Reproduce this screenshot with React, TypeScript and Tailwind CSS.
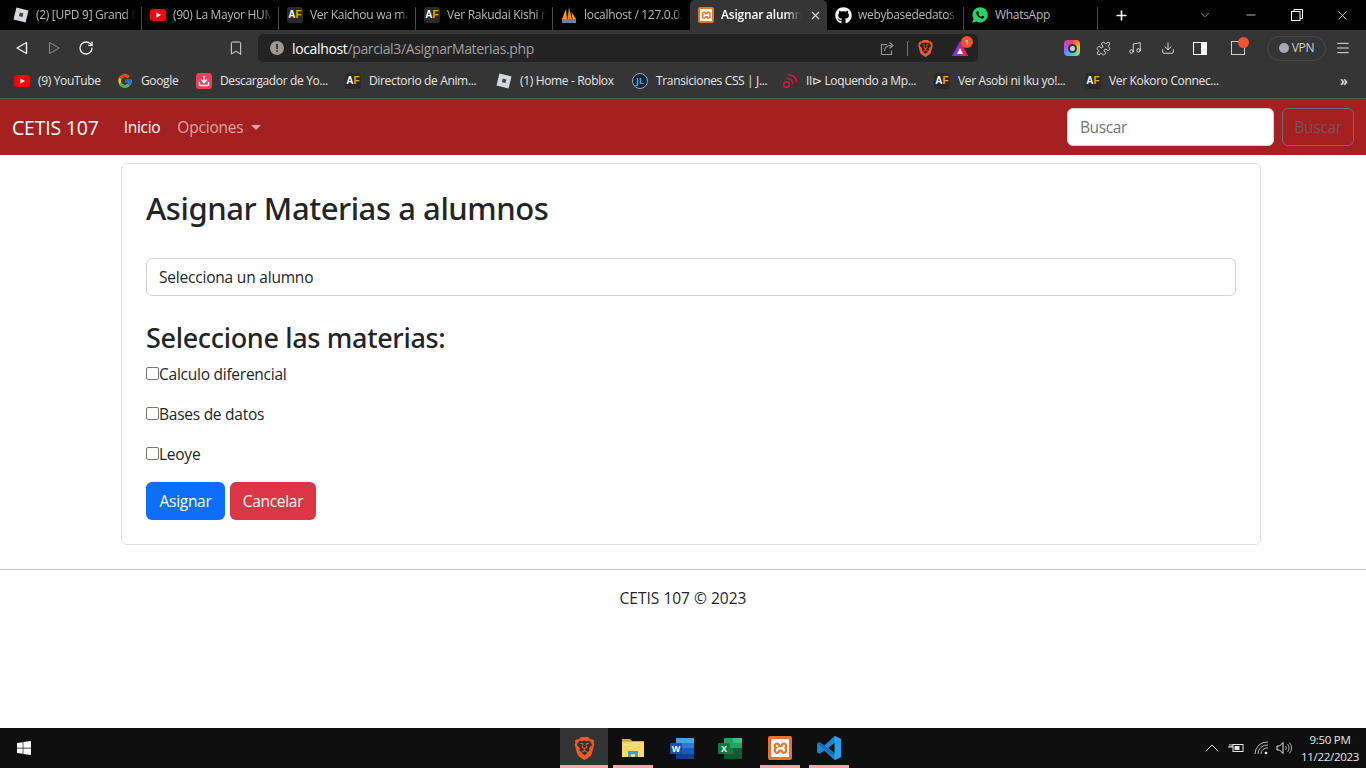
import { Bookmark, ChevronDown, Download, Menu, Minus, Music, Plus, Puzzle, RotateCw, ChevronUp, X } from "lucide-react";
import { FaGithub, FaWindows } from "react-icons/fa";
import { FcGoogle } from "react-icons/fc";
import { SiBrave, SiXampp } from "react-icons/si";
import { IoLogoWhatsapp } from "react-icons/io";

const ui = "font-['Open_Sans','Noto_Sans',sans-serif]";

function Roblox({ size = 16 }: { size?: number }) {
  return (
    <svg width={size} height={size} viewBox="0 0 16 16">
      <path d="M3.4 0.5 15.5 3.4 12.6 15.5 0.5 12.6Z" fill="#d5d8dc" />
      <path d="M6.8 5.6 10.4 6.5 9.5 10.1 5.9 9.2Z" fill="#444" />
    </svg>
  );
}

function Youtube() {
  return (
    <svg width="16" height="12" viewBox="0 0 16 12">
      <rect width="16" height="12" rx="3" fill="#f00" />
      <path d="M6.3 3.3 11 6 6.3 8.7Z" fill="#fff" />
    </svg>
  );
}

function AF() {
  return (
    <span className="flex h-4 w-4 shrink-0 items-center justify-center rounded-[3px] bg-[#2a2a2a] font-['Liberation_Sans',sans-serif] text-[10px] font-bold leading-none text-white">
      A<span className="text-[#f5a623]">F</span>
    </span>
  );
}

function Pma() {
  return (
    <svg width="18" height="18" viewBox="0 0 18 18">
      <path d="M2 13 6 3 7 13Z" fill="#f39c2b" />
      <path d="M7.5 13 9 1 12 13Z" fill="#e8891c" />
      <path d="M12.5 13 11.5 6 16 13Z" fill="#f39c2b" />
      <rect x="2" y="13" width="14" height="4" fill="#6b7fa8" />
    </svg>
  );
}

function Xampp({ size = 16 }: { size?: number }) {
  return (
    <span className="flex shrink-0 items-center justify-center rounded-[2px] bg-[#e8742c]" style={{ width: size, height: size }}>
      <SiXampp color="#fff" size={size * 0.78} />
    </span>
  );
}

function Word() {
  return (
    <svg width="24" height="24" viewBox="0 0 24 24">
      <rect x="6" y="2" width="18" height="21" rx="1" fill="#2b7cd3" />
      <rect x="6" y="2" width="18" height="5" fill="#41a5ee" />
      <rect x="6" y="12" width="18" height="6" fill="#185abd" />
      <rect x="6" y="18" width="18" height="5" fill="#103f91" />
      <rect x="0" y="7" width="12" height="11" rx="1" fill="#1e4fb0" />
      <text x="6" y="16" textAnchor="middle" fontSize="9" fontWeight="700" fill="#fff" fontFamily="Liberation Sans">W</text>
    </svg>
  );
}

function Excel() {
  return (
    <svg width="24" height="24" viewBox="0 0 24 24">
      <rect x="6" y="2" width="18" height="21" rx="1" fill="#21a366" />
      <rect x="15" y="2" width="9" height="5" fill="#33c481" />
      <rect x="6" y="12" width="9" height="6" fill="#107c41" />
      <rect x="15" y="12" width="9" height="6" fill="#185c37" />
      <rect x="6" y="18" width="18" height="5" fill="#0f5a32" />
      <rect x="0" y="7" width="12" height="11" rx="1" fill="#107c41" />
      <text x="6" y="16" textAnchor="middle" fontSize="9" fontWeight="700" fill="#fff" fontFamily="Liberation Sans">X</text>
    </svg>
  );
}

function VsCode() {
  return (
    <svg width="26" height="26" viewBox="0 0 24 24">
      <path d="M17.2 1 23 3.8v16.4L17.2 23 7.6 14.2 3.4 17.4 1 16.2V7.8l2.4-1.2 4.2 3.2zM17.4 7.2 11.2 12l6.2 4.8z" fill="#1a8ad6" />
      <path d="M17.2 1 23 3.8v16.4L17.2 23z" fill="#27a3ea" />
      <path d="M3.4 6.6 17.2 17v0L15 19 1 7.8z" fill="#0f6fb5" />
    </svg>
  );
}

function Tab({ icon, title, active, noSep }: { icon: React.ReactNode; title: string; active?: boolean; noSep?: boolean }) {
  return (
    <div className={`flex h-[30px] w-[137px] shrink-0 items-center pl-[7px] ${active ? "rounded-t-[5px] bg-[#353535]" : ""}`}>
      <span className="flex w-[18px] shrink-0 justify-center">{icon}</span>
      {active ? (
        <>
          <span className="ml-[6px] w-[80px] overflow-hidden whitespace-nowrap text-[12px] font-semibold tracking-[-0.2px] text-white [mask-image:linear-gradient(90deg,#000_80%,transparent)]">{title}</span>
          <X size={13} className="ml-[8px] text-[#e0e0e0]" />
        </>
      ) : (
        <span className="ml-[6px] w-[99px] overflow-hidden whitespace-nowrap text-[12px] tracking-[-0.3px] text-[#b9b9b9] [mask-image:linear-gradient(90deg,#000_90%,transparent)]">{title}</span>
      )}
      {!active && !noSep && <span className="ml-auto h-[23px] w-px self-end bg-[#4a4a4a]" />}
    </div>
  );
}

function Mark({ icon, title, width }: { icon: React.ReactNode; title: string; width: number }) {
  return (
    <div className="flex shrink-0 items-center" style={{ width }}>
      <span className="flex w-4 shrink-0 justify-center">{icon}</span>
      <span className="ml-[8px] whitespace-nowrap text-[12px] tracking-[-0.35px] text-[#e6e6e6]">{title}</span>
    </div>
  );
}

function BrowserBar() {
  return (
    <>
      <div className="flex h-[30px] items-center bg-black pl-[5px]">
        <Tab icon={<Roblox />} title="(2) [UPD 9] Grand Piece" />
        <Tab icon={<Youtube />} title="(90) La Mayor HUMILLACIÓN" />
        <Tab icon={<AF />} title="Ver Kaichou wa maid" />
        <Tab icon={<AF />} title="Ver Rakudai Kishi no" />
        <Tab noSep icon={<Pma />} title="localhost / 127.0.0.1" />
        <Tab active icon={<Xampp />} title="Asignar alumnos" />
        <Tab icon={<FaGithub size={17} color="#fff" />} title="webybasededatos2" />
        <div className="flex h-[30px] w-[134px] shrink-0 items-center pl-[7px]">
          <IoLogoWhatsapp size={18} color="#25d366" className="shrink-0" />
          <span className="ml-[6px] text-[12px] tracking-[-0.3px] text-[#b9b9b9]">WhatsApp</span>
          <span className="ml-auto h-[23px] w-px self-end bg-[#4a4a4a]" />
        </div>
        <Plus size={15} strokeWidth={2.5} className="ml-[16px] text-white" />
        <ChevronDown size={14} strokeWidth={1.2} className="ml-[69px] text-[#cfcfcf]" />
        <Minus size={14} strokeWidth={1.2} className="ml-[32px] text-white" />
        <svg width="12" height="12" viewBox="0 0 12 12" className="ml-[33px]" fill="none" stroke="#fff">
          <rect x="0.5" y="2.5" width="8.5" height="9" />
          <path d="M3 2.5V0.5h8.5v9H9" />
        </svg>
        <X size={15} strokeWidth={1.2} className="ml-[32px] text-white" />
      </div>

      <div className="flex h-9 items-center bg-[#353535]">
        <svg width="14" height="14" viewBox="0 0 14 14" className="ml-[15px]" fill="none" stroke="#f0f0f0" strokeWidth="1.4" strokeLinejoin="round">
          <path d="M11.5 1.5v11L2 7Z" />
        </svg>
        <svg width="14" height="14" viewBox="0 0 14 14" className="ml-[18px]" fill="none" stroke="#777" strokeWidth="1.3" strokeLinejoin="round">
          <path d="M2.5 1.5v11L12 7Z" />
        </svg>
        <RotateCw size={16} strokeWidth={1.9} className="ml-[17px] text-[#f0f0f0]" />
        <Bookmark size={16} strokeWidth={1.5} className="ml-[134px] text-[#dcdcdc]" />
        <div className="ml-[14px] flex h-7 w-[720px] items-center rounded-[5px] bg-[#232323] pl-[12px]">
          <span className="flex h-[14px] w-[14px] items-center justify-center rounded-full bg-[#9a9a9a] text-[10px] font-bold leading-none text-[#232323]">!</span>
          <span className="ml-[8px] text-[14px] tracking-[-0.36px] text-white">localhost<span className="text-[#a0a0a0]">/parcial3/AsignarMaterias.php</span></span>
          <svg width="15" height="15" viewBox="0 0 15 15" className="ml-auto" fill="none" stroke="#999" strokeWidth="1.1">
            <path d="M7 3.5H1.5v10h10V9.5" />
            <path d="M4.5 10c0-4 3-5.5 7-5.5M9.5 1.5l3.5 3-3.5 3" />
          </svg>
          <span className="ml-[12px] h-[15px] w-px bg-[#777]" />
          <SiBrave size={17} color="#f15a22" className="ml-[9px]" />
          <span className="relative ml-[18px] flex h-4 w-4 items-center justify-center">
            <svg width="16" height="15" viewBox="0 0 16 15">
              <path d="M8 0 16 15H0Z" fill="#7b2ff7" />
              <path d="M8 0 16 15H8Z" fill="#e0245e" />
              <path d="M8 7 11 13H5Z" fill="#fff" />
            </svg>
            <span className="absolute -right-[5px] -top-[4px] flex h-[12px] w-[12px] items-center justify-center rounded-full bg-[#f0532d] text-[8px] leading-none text-white">1</span>
          </span>
          <span className="w-[10px]" />
        </div>
        <span className="ml-[86px] flex h-4 w-4 items-center justify-center rounded-[4px] bg-[conic-gradient(#f43f5e,#facc15,#22d3ee,#a855f7,#f43f5e)]">
          <span className="h-[9px] w-[9px] rounded-full border-2 border-[#333] bg-[#cbd5e1]" />
        </span>
        <Puzzle size={15} strokeWidth={1.4} className="ml-[16px] text-[#f0f0f0]" />
        <Music size={14} strokeWidth={1.4} className="ml-[17px] text-[#f0f0f0]" />
        <Download size={14} strokeWidth={1.4} className="ml-[19px] text-[#f0f0f0]" />
        <svg width="14" height="13" viewBox="0 0 14 13" className="ml-[18px]">
          <rect x="0.5" y="0.5" width="13" height="12" fill="none" stroke="#fff" />
          <rect x="8" y="0.5" width="6" height="12" fill="#fff" />
        </svg>
        <span className="relative ml-[24px] flex h-[14px] w-[14px] border border-[#cfcfcf]">
          <span className="absolute -right-[5px] -top-[5px] h-[11px] w-[11px] rounded-full bg-[#f0532d]" />
        </span>
        <span className="ml-[22px] flex h-[25px] w-[59px] items-center justify-center gap-[3px] rounded-full border border-[#4a4a4a] text-[12px] tracking-[-0.3px] text-[#d0d0d0]">
          <span className="h-[10px] w-[10px] rounded-full bg-[#a8a8b8]" />
          VPN
        </span>
        <Menu size={16} strokeWidth={1.4} className="ml-[9px] text-[#f0f0f0]" />
      </div>

      <div className="flex h-[33px] items-center border-b border-[#555] bg-[#353535] pb-[3px] pl-[14px]">
        <Mark width={103} icon={<Youtube />} title="(9) YouTube" />
        <Mark width={79} icon={<FcGoogle size={16} />} title="Google" />
        <Mark
          width={149}
          icon={
            <span className="flex h-4 w-4 items-center justify-center rounded-[3px] bg-[#ee3f56]">
              <Download size={12} strokeWidth={3} color="#fff" />
            </span>
          }
          title="Descargador de Yo..."
        />
        <Mark width={151} icon={<AF />} title="Directorio de Anim..." />
        <Mark width={136} icon={<Roblox />} title="(1) Home - Roblox" />
        <Mark
          width={150}
          icon={
            <span className="flex h-4 w-4 items-center justify-center rounded-full border border-[#9ab] bg-[#12263a] text-[9px] font-bold leading-none text-[#4aa3e0]">JL</span>
          }
          title="Transiciones CSS | J..."
        />
        <Mark
          width={152}
          icon={
            <svg width="16" height="16" viewBox="0 0 16 16" fill="none" stroke="#e1133c" strokeWidth="1.6">
              <circle cx="4.5" cy="11.5" r="2.8" />
              <path d="M5 5.5A6 6 0 0 1 11 11M6 1.5A10 10 0 0 1 15 9" />
            </svg>
          }
          title="II⊳ Loquendo a Mp..."
        />
        <Mark width={151} icon={<AF />} title="Ver Asobi ni Iku yo!..." />
        <Mark width={255} icon={<AF />} title="Ver Kokoro Connec..." />
        <span className="text-[14px] font-semibold leading-none text-[#e6e6e6]">»</span>
      </div>
    </>
  );
}

function Navbar() {
  return (
    <nav className="flex h-14 items-center bg-[#a52020] pl-3 pr-3">
      <span className="mt-[2px] text-[19.5px] tracking-[-0.2px] text-white">CETIS 107</span>
      <span className="ml-[25px] mt-[2px] text-[15.5px] tracking-[-0.3px] text-white">Inicio</span>
      <span className="ml-[17px] mt-[2px] text-[15.5px] tracking-[-0.2px] text-[#dba6a6]">Opciones</span>
      <span className="ml-[7px] h-0 w-0 border-x-[5px] border-t-[5px] border-x-transparent border-t-[#dba6a6]" />
      <div className="ml-auto flex gap-2">
        <div className="flex h-[38px] w-[207px] items-center rounded-[6px] border border-[#ced4da] bg-white px-3 pt-[2px] text-[15.5px] tracking-[-0.4px] text-[#6c757d]">Buscar</div>
        <div className="flex h-[38px] w-[72px] items-center justify-center rounded-[6px] border border-[#6c6f72] pt-[2px] text-[15.5px] tracking-[-0.3px] text-[#80505a]">Buscar</div>
      </div>
    </nav>
  );
}

const materias = ["Calculo diferencial", "Bases de datos", "Leoye"];

function Card() {
  return (
    <div className="ml-[121px] mt-2 w-[1140px] rounded-[6px] border border-[#dfdfdf] px-6 pb-6 pt-[23px]">
      <h1 className="font-['Noto_Sans',sans-serif] text-[31px] font-medium leading-[43px] tracking-[-0.43px] text-[#212529]">Asignar Materias a alumnos</h1>
      <div className="mt-[28px] flex h-[38px] items-center rounded-[6px] border border-[#ced4da] px-3 pt-[2px] text-[15.5px] tracking-[-0.2px] text-[#212529]">Selecciona un alumno</div>
      <h2 className="mt-[23px] font-['Noto_Sans',sans-serif] text-[27px] font-medium leading-[38px] tracking-[-0.33px] text-[#212529]">Seleccione las materias:</h2>
      <div className="mt-[6px] flex flex-col gap-4">
        {materias.map((m) => (
          <label key={m} className="flex h-6 items-center text-[15.5px] tracking-[-0.25px] text-[#212529]">
            <span className="mb-[4px] h-[13px] w-[13px] rounded-[2px] border border-[#767676] bg-white" />
            {m}
          </label>
        ))}
      </div>
      <div className="mt-[15px] flex gap-[5px]">
        <button className="h-[38px] w-[79px] rounded-[6px] bg-[#0d6efd] pt-[2px] text-[15.5px] tracking-[-0.3px] text-white">Asignar</button>
        <button className="h-[38px] w-[86px] rounded-[6px] bg-[#dc3545] pt-[2px] text-[15.5px] tracking-[-0.3px] text-white">Cancelar</button>
      </div>
    </div>
  );
}

function TaskIcon({ width, active, line, className, children }: { width: number; active?: boolean; line?: boolean; className?: string; children: React.ReactNode }) {
  return (
    <div className={`relative flex h-10 items-center justify-center ${active ? "bg-[#333]" : ""} ${className ?? ""}`} style={{ width }}>
      {children}
      {line && <span className="absolute inset-x-0 bottom-0 h-[3px] bg-[#f4a6a6]" />}
    </div>
  );
}

function Taskbar() {
  return (
    <div className="flex h-10 items-center bg-[#0f0f0f]">
      <FaWindows size={16} color="#fff" className="ml-4" />
      <div className="ml-[528px] flex h-10">
        <TaskIcon width={48} active line><SiBrave size={23} color="#f15a22" /></TaskIcon>
        <TaskIcon width={40} line className="ml-[5px]">
          <svg width="22" height="20" viewBox="0 0 22 20">
            <path d="M0 1h8l2 2h12v16H0z" fill="#e8a820" />
            <rect y="4" width="22" height="15" fill="#fcd96b" />
            <path d="M6 19v-6h10v6h-3v-3H9v3z" fill="#3f9ae0" />
          </svg>
        </TaskIcon>
        <TaskIcon width={40} className="ml-[9px]"><Word /></TaskIcon>
        <TaskIcon width={40} className="ml-[8px]"><Excel /></TaskIcon>
        <TaskIcon width={40} line className="ml-[10px]"><Xampp size={24} /></TaskIcon>
        <TaskIcon width={40} line className="ml-[9px]"><VsCode /></TaskIcon>
      </div>
      <div className="ml-auto flex items-center text-[#e6e6e6]">
        <ChevronUp size={24} strokeWidth={1} />
        <svg width="16" height="12" viewBox="0 0 16 12" className="ml-[4px]" fill="none" stroke="#e6e6e6">
          <rect x="5" y="2.5" width="10" height="7" />
          <rect x="6.5" y="4" width="5" height="4" fill="#e6e6e6" stroke="none" />
          <path d="M0 5h5M2 2v3M4 2v3" />
        </svg>
        <svg width="15" height="14" viewBox="0 0 15 14" className="ml-[10px]" fill="none" stroke="#bdbdbd" strokeWidth="1">
          <path d="M1 13A12 12 0 0 1 14 1M4 13A9 9 0 0 1 14 4M7 13A6 6 0 0 1 14 7" />
          <circle cx="12" cy="12" r="1.3" fill="#fff" stroke="none" />
        </svg>
        <svg width="16" height="14" viewBox="0 0 16 14" className="ml-[7px]" fill="none" stroke="#e6e6e6" strokeWidth="1">
          <path d="M1 5h2.5L7 1.5v11L3.5 9H1z" />
          <path d="M9.5 5a3 3 0 0 1 0 4M11.5 3a6 6 0 0 1 0 8M13.5 1.5a9 9 0 0 1 0 11" stroke="#aaa" />
        </svg>
        <div className="ml-[10px] mr-[8px] flex w-[56px] flex-col items-center whitespace-nowrap text-[11.5px] leading-[17px] tracking-[-0.3px]">
          <span>9:50 PM</span>
          <span>11/22/2023</span>
        </div>
      </div>
    </div>
  );
}

export default function App() {
  return (
    <div className={`flex h-[768px] w-[1366px] flex-col overflow-hidden bg-white ${ui}`}>
      <BrowserBar />
      <main className="flex-1">
        <Navbar />
        <Card />
        <hr className="mt-6 border-[#c9c9c9]" />
        <p className="mt-[17px] text-center text-[15.5px] text-[#212529]">CETIS 107 © 2023</p>
      </main>
      <Taskbar />
    </div>
  );
}
